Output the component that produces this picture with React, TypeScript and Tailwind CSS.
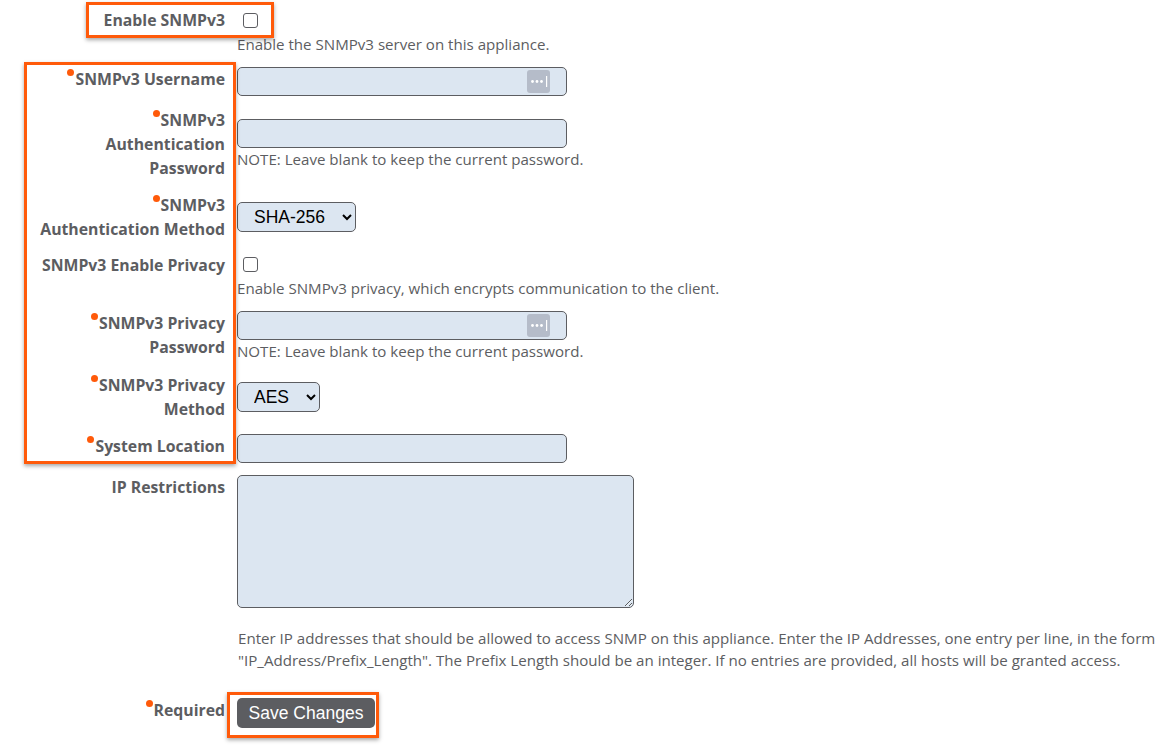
import React from "react";

const sans = "font-['Open_Sans',sans-serif]";
const arial = "font-['Liberation_Sans',Arial,sans-serif]";
const field = "block bg-[#dce6f1] border border-[#5c5d61] rounded-[5px]";
const help = "-mt-px text-[15.1px] leading-[24px] text-[#5c5d61] whitespace-nowrap";

function Label({ lines, req }: { lines: string[]; req?: boolean }) {
  return (
    <div className="w-[225px] shrink-0 text-right font-bold text-[15.8px] leading-[24px] text-[#5c5d61]">
      {lines.map((l, i) => (
        <div key={l}>
          <span className="relative">
            {req && i === 0 && (
              <span className="absolute left-[-8px] top-[1px] w-[7px] h-[7px] rounded-full bg-[#ff5a0a]" />
            )}
            {l}
          </span>
        </div>
      ))}
    </div>
  );
}

function KeyIcon() {
  return (
    <svg className="absolute right-[17px] top-[3px]" width="23" height="23" viewBox="0 0 23 23">
      <rect x="0" y="0" width="23" height="23" rx="3" fill="#b5bcc9" />
      <circle cx="5.5" cy="11.5" r="1.4" fill="#fff" />
      <circle cx="10" cy="11.5" r="1.4" fill="#fff" />
      <circle cx="14.5" cy="11.5" r="1.4" fill="#fff" />
      <rect x="19" y="6" width="1.2" height="11" fill="#fff" />
    </svg>
  );
}

function TextField({ icon }: { icon?: boolean }) {
  return (
    <div className="relative w-[330px] h-[29px]">
      <input type="text" className={`${field} w-full h-full`} />
      {icon && <KeyIcon />}
    </div>
  );
}

function Select({ value, width }: { value: string; width: string }) {
  return (
    <select
      defaultValue={value}
      className={`${field} ${arial} ${width} h-[30px] text-[17.5px] text-black pl-[12px]`}
    >
      <option>{value}</option>
    </select>
  );
}

function Check() {
  return (
    <input
      type="checkbox"
      className="block appearance-none w-[15px] h-[15px] ml-[6px] bg-white border border-[#5c5d61] rounded-[3px]"
    />
  );
}

function Row({ className, children }: { className: string; children: React.ReactNode }) {
  return <div className={`flex gap-[12px] ${className}`}>{children}</div>;
}

export default function App() {
  return (
    <div className={`relative w-[1170px] h-[746px] bg-white overflow-hidden ${sans}`}>
      <div className="pt-[8px]">
        <Row className="h-[59px]">
          <Label lines={["Enable SNMPv3"]} />
          <div>
            <div className="pt-[5px] h-[25px]"><Check /></div>
            <p className={help}>Enable the SNMPv3 server on this appliance.</p>
          </div>
        </Row>
        <Row className="h-[41px]">
          <Label lines={["SNMPv3 Username"]} req />
          <TextField icon />
        </Row>
        <Row className="h-[85px]">
          <Label lines={["SNMPv3", "Authentication", "Password"]} req />
          <div className="pt-[11px]">
            <TextField />
            <p className={help}>NOTE: Leave blank to keep the current password.</p>
          </div>
        </Row>
        <Row className="h-[60px]">
          <Label lines={["SNMPv3", "Authentication Method"]} req />
          <div className="pt-[9px]"><Select value="SHA-256" width="w-[119px]" /></div>
        </Row>
        <Row className="h-[58px]">
          <Label lines={["SNMPv3 Enable Privacy"]} />
          <div>
            <div className="pt-[4px] h-[24px]"><Check /></div>
            <p className={help}>Enable SNMPv3 privacy, which encrypts communication to the client.</p>
          </div>
        </Row>
        <Row className="h-[62px]">
          <Label lines={["SNMPv3 Privacy", "Password"]} req />
          <div>
            <TextField icon />
            <p className={help}>NOTE: Leave blank to keep the current password.</p>
          </div>
        </Row>
        <Row className="h-[61px]">
          <Label lines={["SNMPv3 Privacy", "Method"]} req />
          <div className="pt-[9px]"><Select value="AES" width="w-[83px]" /></div>
        </Row>
        <Row className="h-[41px]">
          <Label lines={["System Location"]} req />
          <TextField />
        </Row>
        <Row className="h-[153px]">
          <Label lines={["IP Restrictions"]} />
          <textarea className={`${field} w-[397px] h-[133px]`} />
        </Row>
        <div className="pl-[238px] h-[70px] -mt-px pb-px text-[15.1px] leading-[22px] text-[#5c5d61] whitespace-nowrap box-content">
          <p>Enter IP addresses that should be allowed to access SNMP on this appliance. Enter the IP Addresses, one entry per line, in the form</p>
          <p>"IP_Address/Prefix_Length". The Prefix Length should be an integer. If no entries are provided, all hosts will be granted access.</p>
        </div>
        <Row className="h-[30px]">
          <Label lines={["Required"]} req />
          <button className={`${arial} w-[138px] h-[30px] bg-[#5c5d61] text-white text-[17.5px] rounded-[5px]`}>
            Save Changes
          </button>
        </Row>
      </div>

      <div className="absolute left-[86px] top-[2px] w-[188px] h-[36px] border-[3px] border-[#ff5a0a] shadow-[0_2px_4px_rgba(0,0,0,0.35)]" />
      <div className="absolute left-[24px] top-[62px] w-[212px] h-[402px] border-[3px] border-[#ff5a0a] shadow-[0_2px_4px_rgba(0,0,0,0.35)]" />
      <div className="absolute left-[227px] top-[692px] w-[152px] h-[46px] border-[3px] border-[#ff5a0a] shadow-[0_2px_4px_rgba(0,0,0,0.35)]" />
    </div>
  );
}
